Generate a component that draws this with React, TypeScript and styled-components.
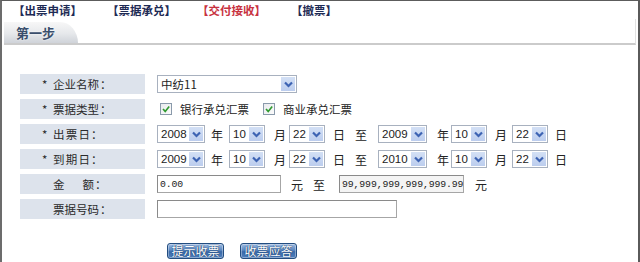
import { FunctionComponent, ReactNode } from "react";
import styled, { createGlobalStyle } from "styled-components";

const GlobalStyle = createGlobalStyle`
  html, body {
    margin: 0;
    padding: 0;
    background: #fff;
  }
  body {
    font-family: "Noto Sans CJK SC", "Liberation Sans", sans-serif;
    font-size: 11.5px;
    color: #222;
  }
`;

type NavItem = { text: string; active?: boolean };

const navItems: NavItem[] = [
  { text: "【出票申请】" },
  { text: "【票据承兑】" },
  { text: "【交付接收】", active: true },
  { text: "【撤票】" },
];

type DateParts = [string, string, string];

const Chevron: FunctionComponent = () => (
  <svg width="9" height="7" viewBox="0 0 9 7">
    <path d="M1 1.5 L4.5 5 L8 1.5" fill="none" stroke="#3d63b3" strokeWidth="2.2" />
  </svg>
);

const Tick: FunctionComponent = () => (
  <svg width="10" height="10" viewBox="0 0 10 10">
    <path d="M2 5 L4.2 7.4 L8.2 2.4" fill="none" stroke="#2f9a2f" strokeWidth="1.6" />
  </svg>
);

const Select: FunctionComponent<{ value: string; w: number }> = ({ value, w }) => (
  <SelectBox $w={w}>
    <SelectValue $cjk={/[^\d]/.test(value)}>{value}</SelectValue>
    <ArrowButton>
      <Chevron />
    </ArrowButton>
  </SelectBox>
);

const Label: FunctionComponent<{ chars: string[]; word: number; required?: boolean }> = ({
  chars,
  word,
  required,
}) => (
  <LabelCell>
    <Star>{required ? "*" : ""}</Star>
    <LabelWord $w={word}>
      {chars.map((c, i) => (
        <span key={i}>{c}</span>
      ))}
    </LabelWord>
    <Colon>：</Colon>
  </LabelCell>
);

const DateRow: FunctionComponent<{ from: DateParts; to: DateParts }> = ({ from, to }) => (
  <ValueCell>
    <Select value={from[0]} w={48} />
    <Unit $w={24} $pl={6}>年</Unit>
    <Select value={from[1]} w={36} />
    <Unit $w={24} $pl={9}>月</Unit>
    <Select value={from[2]} w={36} />
    <Unit $w={22} $pl={8}>日</Unit>
    <Unit $w={31} $pl={8}>至</Unit>
    <Select value={to[0]} w={49} />
    <Unit $w={24} $pl={10}>年</Unit>
    <Select value={to[1]} w={36} />
    <Unit $w={25} $pl={8}>月</Unit>
    <Select value={to[2]} w={36} />
    <Unit $w={24} $pl={7}>日</Unit>
  </ValueCell>
);

const Check: FunctionComponent<{ children: ReactNode }> = ({ children }) => (
  <CheckLabel>
    <CheckBox>
      <Tick />
    </CheckBox>
    <span>{children}</span>
  </CheckLabel>
);

export default function App() {
  return (
    <>
      <GlobalStyle />
      <Frame>
        <NavBar>
          {navItems.map((item) => (
            <NavLink key={item.text} $active={item.active}>
              {item.text}
            </NavLink>
          ))}
        </NavBar>

        <Header>
          <Tab>第一步</Tab>
        </Header>

        <Form>
          <Label required chars={["企", "业", "名", "称"]} word={46} />
          <ValueCell>
            <Select value="中纺11" w={140} />
          </ValueCell>

          <Label required chars={["票", "据", "类", "型"]} word={46} />
          <ValueCell>
            <Check>银行承兑汇票</Check>
            <Check>商业承兑汇票</Check>
          </ValueCell>

          <Label required chars={["出", "票", "日"]} word={37} />
          <DateRow from={["2008", "10", "22"]} to={["2009", "10", "22"]} />

          <Label required chars={["到", "期", "日"]} word={37} />
          <DateRow from={["2009", "10", "22"]} to={["2010", "10", "22"]} />

          <Label chars={["金", "额"]} word={41} />
          <ValueCell>
            <TextInput $w={124}>0.00</TextInput>
            <Unit $w={32} $pl={10}>元</Unit>
            <Unit $w={26} $pl={0}>至</Unit>
            <TextInput $w={125} $muted>99,999,999,999,999.99</TextInput>
            <Unit $w={30} $pl={11}>元</Unit>
          </ValueCell>

          <Label chars={["票", "据", "号", "码"]} word={46} />
          <ValueCell>
            <TextInput $w={240} />
          </ValueCell>
        </Form>

        <Actions>
          <ActionButton>提示收票</ActionButton>
          <ActionButton>收票应答</ActionButton>
        </Actions>
      </Frame>
    </>
  );
}

const Frame = styled.div`
  width: 640px;
  height: 262px;
  box-sizing: border-box;
  border-top: 1px solid #5c5c5c;
  border-left: 2px solid #6c6c6c;
  border-right: 2px solid #5a5a5a;
  overflow: hidden;
  display: flex;
  flex-direction: column;
`;

const NavBar = styled.div`
  height: 18px;
  display: grid;
  grid-template-columns: 94px 90px 94px auto;
  align-items: center;
  padding-left: 11px;
`;

const NavLink = styled.span<{ $active?: boolean }>`
  font-size: 11.5px;
  font-weight: bold;
  color: ${({ $active }) => ($active ? "#c8323f" : "#1e2b55")};
  white-space: nowrap;
`;

const Header = styled.div`
  margin-left: 2px;
  width: 631px;
  height: 21px;
  padding-top: 3px;
  border-right: 1px solid #e2e2e2;
  border-bottom: 2px solid #cbcbcb;
  display: flex;
  align-items: flex-end;
`;

const Tab = styled.div`
  width: 74px;
  height: 21px;
  box-sizing: border-box;
  padding-left: 12px;
  display: flex;
  align-items: center;
  background: linear-gradient(#f7f7f7, #e6e8eb 55%, #cfd3d9);
  border-top-right-radius: 18px 100%;
  font-size: 13px;
  font-weight: bold;
  color: #3a4e6c;
  text-shadow: 0 0 2px #fff;
`;

const Form = styled.div`
  margin-top: 29px;
  padding-left: 18px;
  display: grid;
  grid-template-columns: 125px 1fr;
  grid-auto-rows: 20px;
  column-gap: 12px;
  row-gap: 5px;
`;

const LabelCell = styled.div`
  background: #dde3ec;
  display: flex;
  align-items: center;
  padding-left: 22px;
  font-size: 11.5px;
  color: #2a2a2a;
`;

const Star = styled.span`
  width: 11px;
`;

const LabelWord = styled.span<{ $w: number }>`
  width: ${({ $w }) => $w}px;
  display: flex;
  justify-content: space-between;
`;

const Colon = styled.span`
  margin-left: 1px;
`;

const ValueCell = styled.div`
  display: flex;
  align-items: center;
`;

const SelectBox = styled.div<{ $w: number }>`
  width: ${({ $w }) => $w}px;
  height: 18px;
  box-sizing: border-box;
  border: 1px solid #a8b1bf;
  background: #fff;
  display: flex;
  align-items: stretch;
  flex-shrink: 0;
`;

const SelectValue = styled.span<{ $cjk: boolean }>`
  flex: 1;
  padding-left: 3px;
  display: flex;
  align-items: center;
  font-family: ${({ $cjk }) =>
    $cjk ? `"Noto Sans CJK SC", sans-serif` : `"Liberation Sans", sans-serif`};
  font-size: 11.5px;
  color: #222;
  overflow: hidden;
`;

const ArrowButton = styled.span`
  width: 14px;
  margin: 1px;
  background: linear-gradient(#d3e0f5, #bccdee);
  display: flex;
  align-items: center;
  justify-content: center;
`;

const Unit = styled.span<{ $w: number; $pl: number }>`
  width: ${({ $w }) => $w}px;
  padding-left: ${({ $pl }) => $pl}px;
  box-sizing: border-box;
  flex-shrink: 0;
  font-size: 12px;
  color: #222;
`;

const CheckLabel = styled.label`
  display: flex;
  align-items: center;
  gap: 8px;
  margin-left: 3px;
  margin-right: 11px;
  font-size: 11.5px;
  color: #222;
`;

const CheckBox = styled.span`
  width: 12px;
  height: 12px;
  box-sizing: border-box;
  border: 1px solid #8a9aab;
  background: linear-gradient(135deg, #e9ebee, #fbfbfb);
  display: flex;
  align-items: center;
  justify-content: center;
`;

const TextInput = styled.div<{ $w: number; $muted?: boolean }>`
  width: ${({ $w }) => $w}px;
  height: 18px;
  box-sizing: border-box;
  border: 1px solid #a6a6a6;
  border-top-color: #8a8a8a;
  border-left-color: #8a8a8a;
  background: ${({ $muted }) => ($muted ? "#f4f4f4" : "#fff")};
  padding-left: 2px;
  display: flex;
  align-items: center;
  flex-shrink: 0;
  font-family: "Liberation Mono", monospace;
  font-size: 9.8px;
  letter-spacing: -0.1px;
  color: #222;
  white-space: nowrap;
  overflow: hidden;
`;

const Actions = styled.div`
  margin-top: 24px;
  padding-left: 165px;
  display: flex;
  gap: 16px;
`;

const ActionButton = styled.button`
  width: 57px;
  height: 16px;
  padding: 0;
  border: 1px solid #234d80;
  border-radius: 3px;
  background: linear-gradient(#9dbbe2, #5a86bf 45%, #3b6aa8 55%, #4f7fbd);
  box-shadow: inset 0 0 0 1px rgba(255, 255, 255, 0.35);
  font-family: "Noto Sans CJK SC", sans-serif;
  font-size: 12px;
  line-height: 14px;
  color: #fff;
  text-shadow: 0 0 1px #173a66, 0 0 1px #173a66;
`;
